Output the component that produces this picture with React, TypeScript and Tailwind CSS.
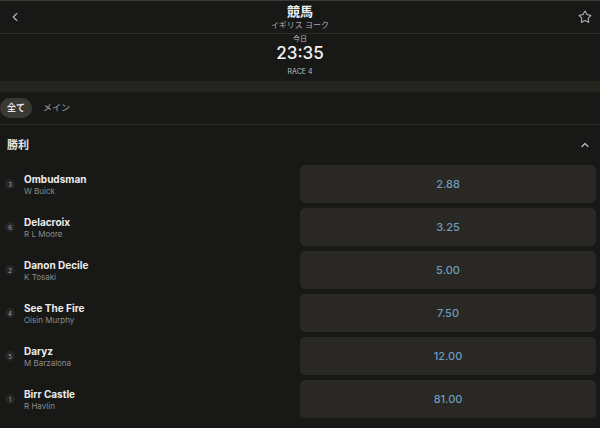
import { ChevronLeft, ChevronUp, Star } from 'lucide-react';

interface Runner {
  no: number;
  name: string;
  jockey: string;
  odds: string;
}

const runners: Runner[] = [
  { no: 3, name: 'Ombudsman', jockey: 'W Buick', odds: '2.88' },
  { no: 6, name: 'Delacroix', jockey: 'R L Moore', odds: '3.25' },
  { no: 2, name: 'Danon Decile', jockey: 'K Tosaki', odds: '5.00' },
  { no: 4, name: 'See The Fire', jockey: 'Oisin Murphy', odds: '7.50' },
  { no: 5, name: 'Daryz', jockey: 'M Barzalona', odds: '12.00' },
  { no: 1, name: 'Birr Castle', jockey: 'R Havlin', odds: '81.00' },
];

const font = { fontFamily: 'Inter, "Noto Sans CJK JP", sans-serif' };

export default function App() {
  return (
    <div className="w-[600px] h-[428px] overflow-hidden bg-[#181816] text-white" style={font}>
      {/* Header */}
      <div className="h-[34px] border-t border-[#3a3a38] border-b border-b-[#2a2a28] flex items-center justify-between px-2">
        <ChevronLeft className="w-[14px] h-[14px] text-[#b5b5b5]" strokeWidth={2} />
        <div className="flex flex-col items-center leading-none mt-[-1px]">
          <span className="text-[13px] font-bold text-[#ececec]">競馬</span>
          <span className="text-[8px] text-[#a8a8a8] mt-[3px]">イギリス ヨーク</span>
        </div>
        <Star className="w-[14px] h-[14px] text-[#b5b5b5]" strokeWidth={1.8} />
      </div>

      {/* Race time */}
      <div className="h-[47px] flex flex-col items-center leading-none pt-[1px]">
        <span className="text-[7px] text-[#bdbdbd]">今日</span>
        <span className="text-[17px] font-medium text-[#f2f2f2] mt-[3px]">23:35</span>
        <span className="text-[7px] text-[#bdbdbd] mt-[6px]">RACE 4</span>
      </div>
      <div className="h-[11px] bg-[#25241f]" />

      {/* Tabs */}
      <div className="h-[33px] border-b border-[#2c2b28] flex items-center gap-[11px]">
        <span className="h-[20px] w-[32px] rounded-full bg-[#3b3934] text-[9px] text-[#e2e2e2] font-bold flex items-center justify-center">
          全て
        </span>
        <span className="text-[9px] text-[#a9a9a9]">メイン</span>
      </div>

      {/* Market header */}
      <div className="h-[40px] flex items-center justify-between pl-[7px] pr-[9px]">
        <span className="text-[11px] font-bold text-[#e6e6e6] mt-[1px]">勝利</span>
        <ChevronUp className="w-[12px] h-[12px] text-[#bdbdbd]" strokeWidth={2.5} />
      </div>

      {/* Runners */}
      <div className="flex flex-col gap-[5px] pr-[4px]">
        {runners.map((r) => (
          <div key={r.no} className="flex items-center h-[38px]">
            <div className="w-[300px] flex items-center">
              <span className="ml-[5px] w-[10px] h-[10px] rounded-full bg-[#272623] text-[6px] text-[#a0a0a0] flex items-center justify-center">
                {r.no}
              </span>
              <div className="ml-[9px] flex flex-col leading-none">
                <span className="text-[10px] font-bold text-[#ececec]">{r.name}</span>
                <span className="text-[8px] text-[#8c8c8c] mt-[3px]">{r.jockey}</span>
              </div>
            </div>
            <div className="flex-1 h-full rounded-[5px] bg-[#292824] flex items-center justify-center">
              <span className="text-[11px] font-medium text-[#6b9dbd]">{r.odds}</span>
            </div>
          </div>
        ))}
      </div>
    </div>
  );
}
